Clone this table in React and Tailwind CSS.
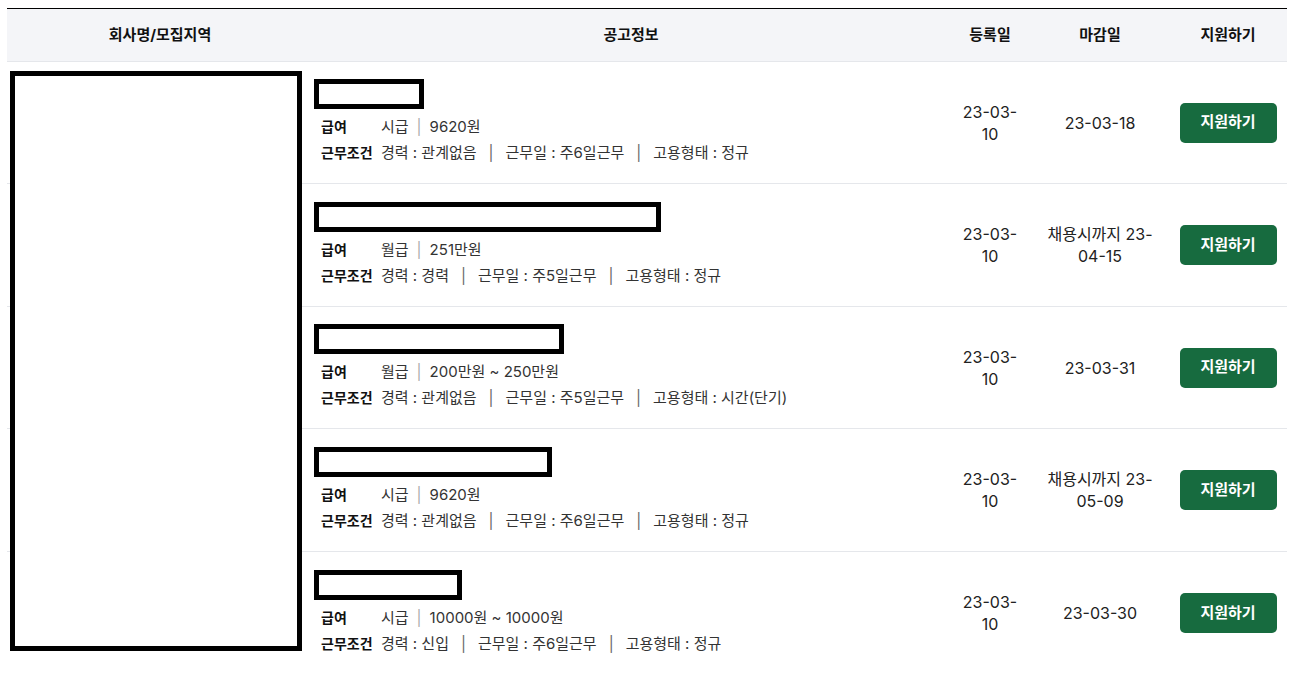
import React from 'react';

const rows = [
  {
    titleW: 'w-[110px]',
    h: 'h-[122px]',
    payType: '시급',
    pay: '9620원',
    career: '관계없음',
    days: '주6일근무',
    kind: '정규',
    posted: '23-03-',
    postedEnd: '10',
    deadline: ['23-03-18'],
  },
  {
    titleW: 'w-[347px]',
    h: 'h-[123px]',
    payType: '월급',
    pay: '251만원',
    career: '경력',
    days: '주5일근무',
    kind: '정규',
    posted: '23-03-',
    postedEnd: '10',
    deadline: ['채용시까지 23-', '04-15'],
  },
  {
    titleW: 'w-[250px]',
    h: 'h-[122px]',
    payType: '월급',
    pay: '200만원 ~ 250만원',
    career: '관계없음',
    days: '주5일근무',
    kind: '시간(단기)',
    posted: '23-03-',
    postedEnd: '10',
    deadline: ['23-03-31'],
  },
  {
    titleW: 'w-[238px]',
    h: 'h-[123px]',
    payType: '시급',
    pay: '9620원',
    career: '관계없음',
    days: '주6일근무',
    kind: '정규',
    posted: '23-03-',
    postedEnd: '10',
    deadline: ['채용시까지 23-', '05-09'],
  },
  {
    titleW: 'w-[148px]',
    h: 'h-[123px]',
    payType: '시급',
    pay: '10000원 ~ 10000원',
    career: '신입',
    days: '주6일근무',
    kind: '정규',
    posted: '23-03-',
    postedEnd: '10',
    deadline: ['23-03-30'],
  },
];

const Sep = () => <span className="mx-[12px] text-[#666]">|</span>;

const JobRow = ({ row }) => (
  <div className={`flex ${row.h} border-b border-[#e5e7eb]`}>
    <div className="w-[306px]" />
    <div className="w-[636px] flex flex-col justify-center">
      <div className={`${row.titleW} h-[30px] border-[5px] border-black ml-px mb-[5px]`} />
      <div className="pl-2 leading-[26px] text-[#333]">
        <div className="flex items-baseline">
          <span className="w-[60px] text-[14px] font-bold text-[#111]">급여</span>
          <span className="text-[15px]">
            {row.payType}
            <span className="mx-[8px] text-[#aaa]">|</span>
            {row.pay}
          </span>
        </div>
        <div className="flex items-baseline">
          <span className="w-[60px] text-[14px] font-bold text-[#111]">근무조건</span>
          <span className="text-[15px]">
            경력 : {row.career}
            <Sep />
            근무일 : {row.days}
            <Sep />
            고용형태 : {row.kind}
          </span>
        </div>
      </div>
    </div>
    <div className="w-[82px] flex items-center justify-center text-center text-[16px] leading-[22px] text-[#222]">
      <div>
        {row.posted}
        <br />
        {row.postedEnd}
      </div>
    </div>
    <div className="w-[138px] flex items-center justify-center text-center text-[16px] leading-[22px] text-[#222]">
      <div>
        {row.deadline.map((d, i) => (
          <div key={i}>{d}</div>
        ))}
      </div>
    </div>
    <div className="w-[118px] flex items-center justify-center">
      <button className="w-[97px] h-[40px] rounded-[5px] bg-[#176b3f] text-white font-bold text-[15px]">
        지원하기
      </button>
    </div>
  </div>
);

export default function App() {
  return (
    <div
      className="bg-white w-[1296px] h-[673px] overflow-hidden pt-2"
      style={{ fontFamily: "Inter, 'Noto Sans CJK KR', sans-serif" }}
    >
      <div className="relative mx-[7px] w-[1280px] border-t border-black">
        <div className="flex h-[53px] bg-[#f4f5f8] border-b border-[#e5e7eb] text-[15px] font-bold text-[#111]">
          <div className="w-[306px] flex items-center justify-center">회사명/모집지역</div>
          <div className="w-[636px] flex items-center justify-center">공고정보</div>
          <div className="w-[82px] flex items-center justify-center">등록일</div>
          <div className="w-[138px] flex items-center justify-center">마감일</div>
          <div className="w-[118px] flex items-center justify-center">지원하기</div>
        </div>
        {rows.map((row, i) => (
          <JobRow key={i} row={row} />
        ))}
        <div className="absolute left-[3px] top-[62px] w-[292px] h-[580px] bg-white border-[5px] border-black" />
      </div>
    </div>
  );
}
